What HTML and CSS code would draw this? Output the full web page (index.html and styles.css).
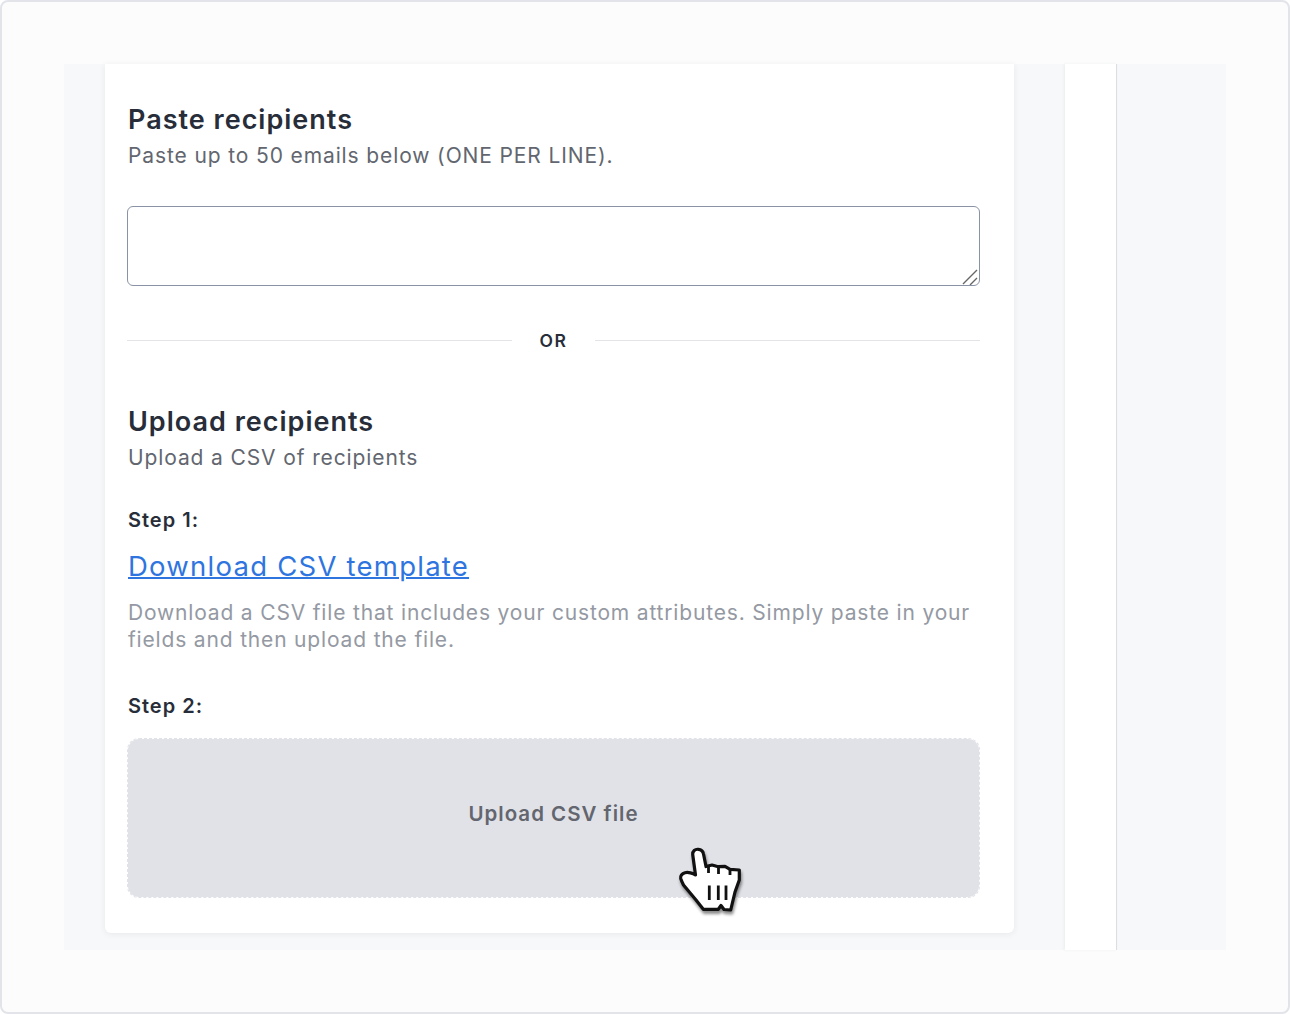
FILE: index.html
```html
<!DOCTYPE html>
<html lang="en">
<head>
<meta charset="utf-8">
<title>Upload recipients</title>
<link rel="stylesheet" href="styles.css">
</head>
<body>
<div class="frame">
  <div class="stage">
    <main class="card">
      <h2 class="heading heading-first">Paste recipients</h2>
      <p class="sub">Paste up to 50 emails below (ONE PER LINE).</p>
      <div class="field">
        <textarea class="emails"></textarea>
        <svg class="grip" width="16" height="16" viewBox="0 0 16 16" aria-hidden="true"><path d="M15 1L1 15M15 9L8 16"/></svg>
      </div>
      <div class="divider"><span class="rule"></span><span class="or">OR</span><span class="rule"></span></div>
      <h2 class="heading">Upload recipients</h2>
      <p class="sub">Upload a CSV of recipients</p>
      <h3 class="step step-one">Step 1:</h3>
      <a class="download" href="#">Download CSV template</a>
      <p class="hint">Download a CSV file that includes your custom attributes. Simply paste in your fields and then upload the file.</p>
      <h3 class="step step-two">Step 2:</h3>
      <div class="drop">
        <span class="drop-label">Upload CSV file</span>
        <svg class="cursor" width="70" height="75" viewBox="0 0 70 75" aria-hidden="true">
          <path class="hand" d="M23.3 7.3C20 7 17.5 9 17.7 12.5L20.5 33C18 31 13 30 10 30.7C7 31.5 5 34 5.7 36.5C6.5 39 7.5 41 8.5 43L21 58L28.3 67.3H43.3L46 63.5L49 67.5L55.7 68L60 50L64.3 38V28L55 27.3L50 24.3L43.3 24.7L37 23L31 24.5L28.5 12C28 9 26 7.5 23.3 7.3Z"/>
          <path class="marks" d="M34.3 43.5V58M43.3 43.5V58M51 43.5V58M33.5 25V31M43.5 25V32M55 28V33"/>
        </svg>
      </div>
    </main>
    <aside class="rail"></aside>
  </div>
</div>
</body>
</html>
```
FILE: styles.css
```css
* { box-sizing: border-box; }
html, body { margin: 0; height: 100%; }
body { font-family: Inter, "Open Sans", sans-serif; color: #272d39; }
.frame {
  width: 1290px; height: 1014px;
  padding: 62px;
  background: #fcfcfc;
  border: 2px solid #e2e4ea;
  border-radius: 8px;
}
.stage {
  display: flex; align-items: flex-start;
  height: 886px;
  padding-left: 41px;
  background: #f7f8fa;
}
.card {
  width: 909px; height: 869px;
  padding: 0 34px 0 22px;
  background: #fff;
  border-radius: 0 0 6px 6px;
  box-shadow: 0 1px 6px rgba(39, 45, 57, .08);
}
.heading { margin: 0; padding-left: 1px; font-size: 27px; line-height: 36px; font-weight: 600; letter-spacing: 1px; }
.heading-first { margin-top: 38px; }
.sub { margin: 0; padding-left: 1px; font-size: 21px; line-height: 36px; letter-spacing: .88px; color: #62666f; }
.field { position: relative; margin-top: 32px; }
.emails {
  display: block; width: 853px; height: 80px;
  background: #fff;
  border: 1px solid #8a93a5;
  border-radius: 6px;
  resize: none;
}
.grip { position: absolute; right: 2px; bottom: 1px; }
.grip path { fill: none; stroke: #666; stroke-width: 1.4; }
.divider { display: flex; align-items: center; height: 28px; margin: 40px 0 50px; }
.rule { flex: 1; height: 1px; background: #e3e4e8; }
.or { width: 83px; text-align: center; font-size: 17.5px; font-weight: 600; letter-spacing: 1.6px; }
.step { margin: 0; padding-left: 1px; font-size: 20px; line-height: 28px; font-weight: 600; letter-spacing: 1px; }
.step-one { margin-top: 30px; }
.step-two { margin-top: 39px; }
.download {
  display: block; margin-top: 14px; padding-left: 1px;
  font-size: 27.5px; line-height: 36px; letter-spacing: 1.24px;
  color: #2f75e0; text-decoration-thickness: 2px;
}
.hint { margin: 15px 0 0; padding-left: 1px; font-size: 21px; line-height: 27px; letter-spacing: .83px; color: #9499a3; }
.drop {
  position: relative;
  display: flex; align-items: center; justify-content: center;
  height: 160px; margin-top: 18px; padding-bottom: 9px;
  background: #e1e2e7;
  background-clip: padding-box;
  border: 1px dashed #e1e2e7;
  border-radius: 12px;
}
.drop-label { font-size: 20.5px; font-weight: 600; letter-spacing: 1px; color: #63666f; }
.cursor { position: absolute; left: 547px; top: 103px; overflow: visible; filter: drop-shadow(1px 3px 1.5px rgba(0, 0, 0, .45)); }
.hand { fill: #fff; stroke: #111; stroke-width: 3.2; stroke-linejoin: round; }
.marks { fill: none; stroke: #111; stroke-width: 2.8; }
.rail {
  width: 52px; height: 886px;
  margin-left: 51px;
  background: #fff;
  border-right: 1px solid #dcdee3;
  box-shadow: -1px 0 3px rgba(39, 45, 57, .06);
}
```
